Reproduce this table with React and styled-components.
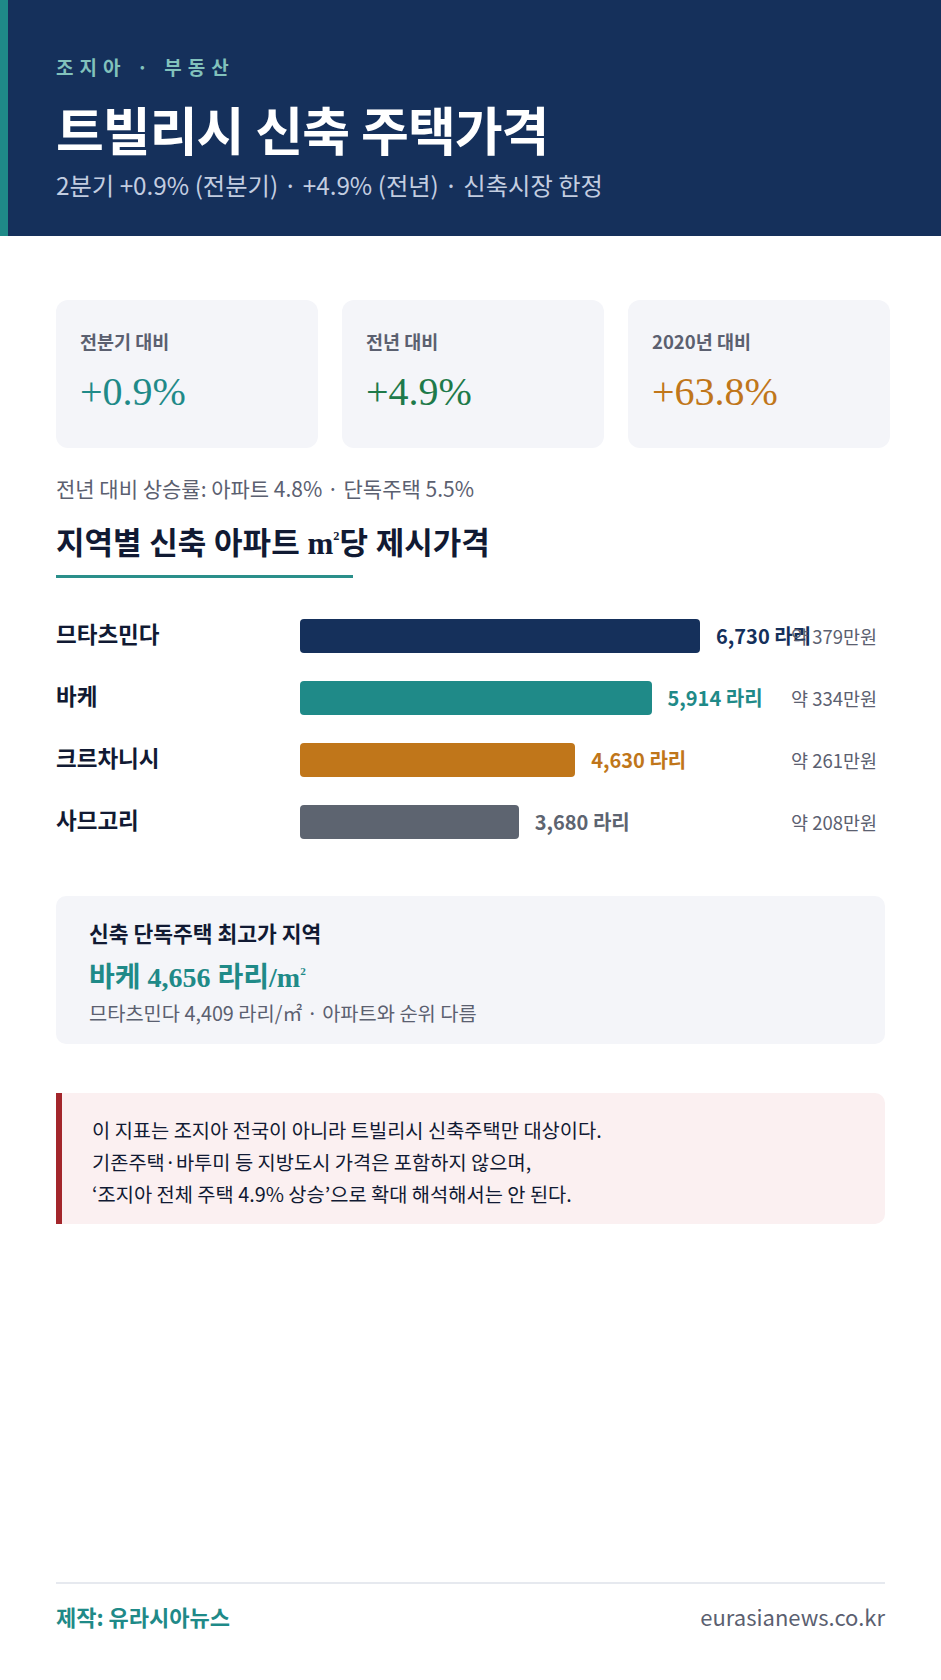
import React from "react";
import styled, { createGlobalStyle } from "styled-components";

const SANS = `"Noto Sans CJK KR", "Noto Sans", sans-serif`;
const SERIF = `"Liberation Serif", "Noto Sans CJK KR", serif`;

const Global = createGlobalStyle`
  html, body { margin: 0; padding: 0; background: #ffffff; }
  body { font-family: ${SANS}; color: #111a33; }
  * { box-sizing: border-box; }
`;

const Page = styled.div`
  width: 941px;
  min-height: 1680px;
  display: flex;
  flex-direction: column;
  background: #ffffff;
`;

const Header = styled.header`
  background: #15305b;
  border-left: 8px solid #1f8a88;
  padding: 54px 48px 36px;
  display: flex;
  flex-direction: column;
`;

const Kicker = styled.div`
  font-size: 19px;
  line-height: 25px;
  font-weight: 700;
  letter-spacing: 6px;
  color: #82c2bc;
`;

const Title = styled.h1`
  margin: 24px 0 0;
  font-family: ${SERIF};
  font-size: 52px;
  line-height: 62px;
  font-weight: 700;
  letter-spacing: -1px;
  color: #ffffff;
`;

const Sub = styled.div`
  margin-top: 5px;
  font-size: 24.3px;
  line-height: 30px;
  color: #c3cde0;
`;

const Main = styled.main`
  flex: 1;
  padding: 64px 56px 0;
  display: flex;
  flex-direction: column;
`;

const Cards = styled.div`
  display: grid;
  grid-template-columns: repeat(3, 262px);
  gap: 24px;
`;

const Card = styled.div`
  background: #f4f5f9;
  border-radius: 12px;
  padding: 28px 24px 0;
  height: 148px;
`;

const CardLabel = styled.div`
  font-size: 18.5px;
  line-height: 26px;
  font-weight: 700;
  color: #5b6070;
`;

const CardValue = styled.div`
  margin-top: 16px;
  font-family: ${SERIF};
  font-size: 40px;
  line-height: 44px;
  font-weight: 500;
  color: ${(p) => p.$color};
`;

const Note = styled.p`
  margin: 26px 0 0;
  font-size: 21px;
  line-height: 28px;
  color: #5b6070;
`;

const SectionTitle = styled.h2`
  margin: 21px 0 0;
  font-family: ${SERIF};
  font-size: 31px;
  line-height: 42px;
  font-weight: 700;
  color: #111a33;
`;

const Sup = styled.sup`
  font-size: 0.4em;
  line-height: 0;
  vertical-align: 1.1em;
`;

const SquareMeter = () => (
  <>
    m<Sup>2</Sup>
  </>
);

const Underline = styled.div`
  width: 297px;
  height: 3px;
  margin-top: 10px;
  background: #2a8f8a;
`;

const Chart = styled.div`
  margin-top: 41px;
  display: flex;
  flex-direction: column;
  gap: 28px;
`;

const Row = styled.div`
  display: grid;
  grid-template-columns: 244px 1fr 86px;
  align-items: center;
  height: 34px;
  padding-right: 8px;
`;

const RowLabel = styled.div`
  font-size: 22.5px;
  line-height: 28px;
  font-weight: 700;
  color: #111a33;
  margin-top: -6px;
`;

const Track = styled.div`
  display: flex;
  align-items: center;
  gap: 16px;
  min-width: 0;
`;

const Bar = styled.div`
  flex-shrink: 0;
  height: 34px;
  border-radius: 4px;
  background: ${(p) => p.$color};
`;

const BarValue = styled.span`
  flex-shrink: 0;
  white-space: nowrap;
  font-size: 20px;
  line-height: 28px;
  font-weight: 700;
  color: ${(p) => p.$color};
`;

const Won = styled.div`
  text-align: right;
  white-space: nowrap;
  font-size: 18.5px;
  line-height: 26px;
  color: #5b6070;
`;

const Highlight = styled.div`
  margin-top: 57px;
  background: #f4f5f9;
  border-radius: 10px;
  padding: 22px 33px 17px;
  display: flex;
  flex-direction: column;
`;

const HiTitle = styled.div`
  font-size: 21.5px;
  line-height: 30px;
  font-weight: 700;
  color: #111a33;
`;

const HiValue = styled.div`
  margin-top: 12px;
  font-family: ${SERIF};
  font-size: 28px;
  line-height: 36px;
  font-weight: 700;
  color: #1f8a88;
`;

const HiSub = styled.div`
  margin-top: 3px;
  font-size: 19.8px;
  line-height: 28px;
  color: #5b6070;
`;

const Caution = styled.div`
  margin-top: 49px;
  background: #fbf0f1;
  border-left: 6px solid #a3262b;
  border-radius: 0 10px 10px 0;
  padding: 21px 30px 14px;
  font-size: 19.8px;
  line-height: 32px;
  color: #111a33;
`;

const Footer = styled.footer`
  margin: 0 56px;
  border-top: 2px solid #e6e9ef;
  padding: 18px 0 50px;
  display: flex;
  justify-content: space-between;
  align-items: center;
`;

const Credit = styled.span`
  font-size: 22px;
  line-height: 28px;
  font-weight: 700;
  color: #1f8a88;
`;

const Site = styled.span`
  font-size: 22px;
  line-height: 28px;
  color: #5b6070;
`;

const cards = [
  { label: "전분기 대비", value: "+0.9%", color: "#1f8a88" },
  { label: "전년 대비", value: "+4.9%", color: "#1e7a4a" },
  { label: "2020년 대비", value: "+63.8%", color: "#c0761a" },
];

const bars = [
  { name: "므타츠민다", value: 6730, won: "약 379만원", color: "#15305b" },
  { name: "바케", value: 5914, won: "약 334만원", color: "#1f8a88" },
  { name: "크르차니시", value: 4630, won: "약 261만원", color: "#c0761a" },
  { name: "사므고리", value: 3680, won: "약 208만원", color: "#5d6470" },
];

const MAX = 6730;
const BAR_MAX = 400;

export default function App() {
  return (
    <>
      <Global />
      <Page>
        <Header>
          <Kicker>조지아 · 부동산</Kicker>
          <Title>트빌리시 신축 주택가격</Title>
          <Sub>2분기 +0.9% (전분기) · +4.9% (전년) · 신축시장 한정</Sub>
        </Header>
        <Main>
          <Cards>
            {cards.map((c) => (
              <Card key={c.label}>
                <CardLabel>{c.label}</CardLabel>
                <CardValue $color={c.color}>{c.value}</CardValue>
              </Card>
            ))}
          </Cards>
          <Note>전년 대비 상승률: 아파트 4.8% · 단독주택 5.5%</Note>
          <SectionTitle>
            지역별 신축 아파트 <SquareMeter />당 제시가격
          </SectionTitle>
          <Underline />
          <Chart>
            {bars.map((b) => (
              <Row key={b.name}>
                <RowLabel>{b.name}</RowLabel>
                <Track>
                  <Bar $color={b.color} style={{ width: `${(b.value / MAX) * BAR_MAX}px` }} />
                  <BarValue $color={b.color}>{b.value.toLocaleString("en-US")} 라리</BarValue>
                </Track>
                <Won>{b.won}</Won>
              </Row>
            ))}
          </Chart>
          <Highlight>
            <HiTitle>신축 단독주택 최고가 지역</HiTitle>
            <HiValue>
              바케 4,656 라리/<SquareMeter />
            </HiValue>
            <HiSub>므타츠민다 4,409 라리/㎡ · 아파트와 순위 다름</HiSub>
          </Highlight>
          <Caution>
            이 지표는 조지아 전국이 아니라 트빌리시 신축주택만 대상이다.
            <br />
            기존주택·바투미 등 지방도시 가격은 포함하지 않으며,
            <br />
            ‘조지아 전체 주택 4.9% 상승’으로 확대 해석해서는 안 된다.
          </Caution>
        </Main>
        <Footer>
          <Credit>제작: 유라시아뉴스</Credit>
          <Site>eurasianews.co.kr</Site>
        </Footer>
      </Page>
    </>
  );
}
